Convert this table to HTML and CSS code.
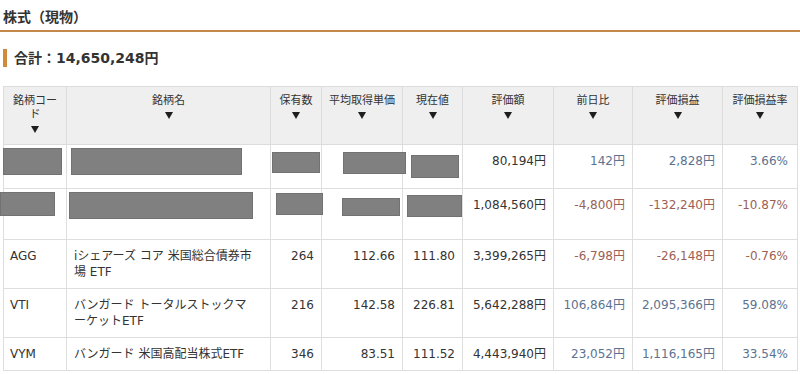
FILE: index.html
```html
<!DOCTYPE html>
<html lang="ja">
<head>
<meta charset="utf-8">
<title>株式（現物）</title>
<link rel="stylesheet" href="styles.css">
</head>
<body>
<div class="page">
  <h2 class="title">株式（現物）</h2>
  <div class="total">合計：14,650,248円</div>
  <div class="table-wrap">
    <table class="holdings">
      <colgroup>
        <col class="c-code"><col class="c-name"><col class="c-qty"><col class="c-avg"><col class="c-price"><col class="c-val"><col class="c-day"><col class="c-pl"><col class="c-rate">
      </colgroup>
      <thead>
        <tr>
          <th><div class="lbl">銘柄コー<br>ド</div><div class="tri"></div></th>
          <th><div class="lbl">銘柄名</div><div class="tri"></div></th>
          <th><div class="lbl">保有数</div><div class="tri"></div></th>
          <th><div class="lbl">平均取得単価</div><div class="tri"></div></th>
          <th><div class="lbl">現在値</div><div class="tri"></div></th>
          <th><div class="lbl">評価額</div><div class="tri"></div></th>
          <th><div class="lbl">前日比</div><div class="tri"></div></th>
          <th><div class="lbl">評価損益</div><div class="tri"></div></th>
          <th><div class="lbl">評価損益率</div><div class="tri"></div></th>
        </tr>
      </thead>
      <tbody>
        <tr class="row-a">
          <td></td><td></td><td class="num"></td><td class="num"></td><td class="num"></td>
          <td class="num">80,194円</td>
          <td class="num pos">142円</td>
          <td class="num pos">2,828円</td>
          <td class="num pos last">3.66%</td>
        </tr>
        <tr class="row-b">
          <td></td><td></td><td class="num"></td><td class="num"></td><td class="num"></td>
          <td class="num">1,084,560円</td>
          <td class="num neg">-4,800円</td>
          <td class="num neg">-132,240円</td>
          <td class="num neg last">-10.87%</td>
        </tr>
        <tr>
          <td>AGG</td>
          <td class="name">iシェアーズ コア 米国総合債券市場 ETF</td>
          <td class="num">264</td>
          <td class="num">112.66</td>
          <td class="num">111.80</td>
          <td class="num">3,399,265円</td>
          <td class="num neg">-6,798円</td>
          <td class="num neg">-26,148円</td>
          <td class="num neg last">-0.76%</td>
        </tr>
        <tr>
          <td>VTI</td>
          <td class="name">バンガード トータルストックマーケットETF</td>
          <td class="num">216</td>
          <td class="num">142.58</td>
          <td class="num">226.81</td>
          <td class="num">5,642,288円</td>
          <td class="num pos">106,864円</td>
          <td class="num pos">2,095,366円</td>
          <td class="num pos last">59.08%</td>
        </tr>
        <tr>
          <td>VYM</td>
          <td class="name">バンガード 米国高配当株式ETF</td>
          <td class="num">346</td>
          <td class="num">83.51</td>
          <td class="num">111.52</td>
          <td class="num">4,443,940円</td>
          <td class="num pos">23,052円</td>
          <td class="num pos">1,116,165円</td>
          <td class="num pos last">33.54%</td>
        </tr>
      </tbody>
    </table>
    <div class="redact ra1"></div>
    <div class="redact ra2"></div>
    <div class="redact ra3"></div>
    <div class="redact ra4"></div>
    <div class="redact ra5"></div>
    <div class="redact rb1"></div>
    <div class="redact rb2"></div>
    <div class="redact rb3"></div>
    <div class="redact rb4"></div>
    <div class="redact rb5"></div>
  </div>
</div>
</body>
</html>
```

FILE: styles.css
```css
* { box-sizing: border-box; }
html, body {
  margin: 0;
  padding: 0;
  background: #fff;
}
body {
  font-family: "DejaVu Sans", "Noto Sans CJK JP", sans-serif;
  color: #333;
  width: 800px;
  text-spacing-trim: space-all;
}
.page {
  display: flex;
  flex-direction: column;
}
.title {
  margin: 0;
  padding: 8px 3px 4px;
  font-size: 14px;
  line-height: 18px;
  font-weight: bold;
  color: #333;
  border-bottom: 2px solid #c4884c;
}
.total {
  margin: 17px 3px 0;
  padding-left: 7px;
  border-left: 4px solid #d08a3a;
  font-size: 14px;
  line-height: 18px;
  font-weight: bold;
  color: #333;
}
.table-wrap {
  position: relative;
  margin: 19px 3px 0;
  width: 794px;
}
.holdings {
  width: 794px;
  table-layout: fixed;
  border-collapse: collapse;
  font-size: 12px;
  border: 1px solid #d8d8d8;
}
.c-code { width: 63px; }
.c-name { width: 204px; }
.c-qty { width: 51px; }
.c-avg { width: 81px; }
.c-price { width: 60px; }
.c-val { width: 91px; }
.c-day { width: 79px; }
.c-pl { width: 90px; }
.c-rate { width: 75px; }

.holdings th {
  background: #efefef;
  border: 1px solid #dcdcdc;
  font-weight: normal;
  font-size: 11px;
  color: #333;
  text-align: center;
  vertical-align: top;
  padding: 7px 4px 8px;
  line-height: 14px;
}
.tri {
  width: 0;
  height: 0;
  margin: 4px auto 3px;
  border-left: 4.5px solid transparent;
  border-right: 4.5px solid transparent;
  border-top: 7px solid #1e1e1e;
}
.holdings td {
  border: 1px solid #dedede;
  vertical-align: top;
  padding: 8px 8px 8px 6px;
  line-height: 16px;
  color: #333;
  white-space: normal;
}
.holdings td.name {
  padding-left: 7px;
  padding-right: 14px;
}
.holdings td.num {
  text-align: right;
  padding-right: 7px;
}
.holdings td.last { padding-right: 9px; }
.holdings td.pos { color: #5c7290; }
.holdings td.neg { color: #9c5f54; }
.row-a { height: 44px; }
.row-b { height: 51px; }

.redact {
  position: absolute;
  background: #808080;
  box-shadow: inset 0 0 0 1px #727272;
}
.ra1 { left: 0; top: 62px; width: 59px; height: 27px; }
.ra2 { left: 68px; top: 62px; width: 171px; height: 27px; }
.ra3 { left: 269px; top: 66px; width: 48px; height: 21px; }
.ra4 { left: 340px; top: 66px; width: 63px; height: 22px; }
.ra5 { left: 408px; top: 69px; width: 48px; height: 23px; }
.rb1 { left: -3px; top: 106px; width: 55px; height: 24px; }
.rb2 { left: 66px; top: 106px; width: 184px; height: 27px; }
.rb3 { left: 273px; top: 107px; width: 47px; height: 22px; }
.rb4 { left: 339px; top: 112px; width: 58px; height: 18px; }
.rb5 { left: 404px; top: 109px; width: 55px; height: 22px; }
```
